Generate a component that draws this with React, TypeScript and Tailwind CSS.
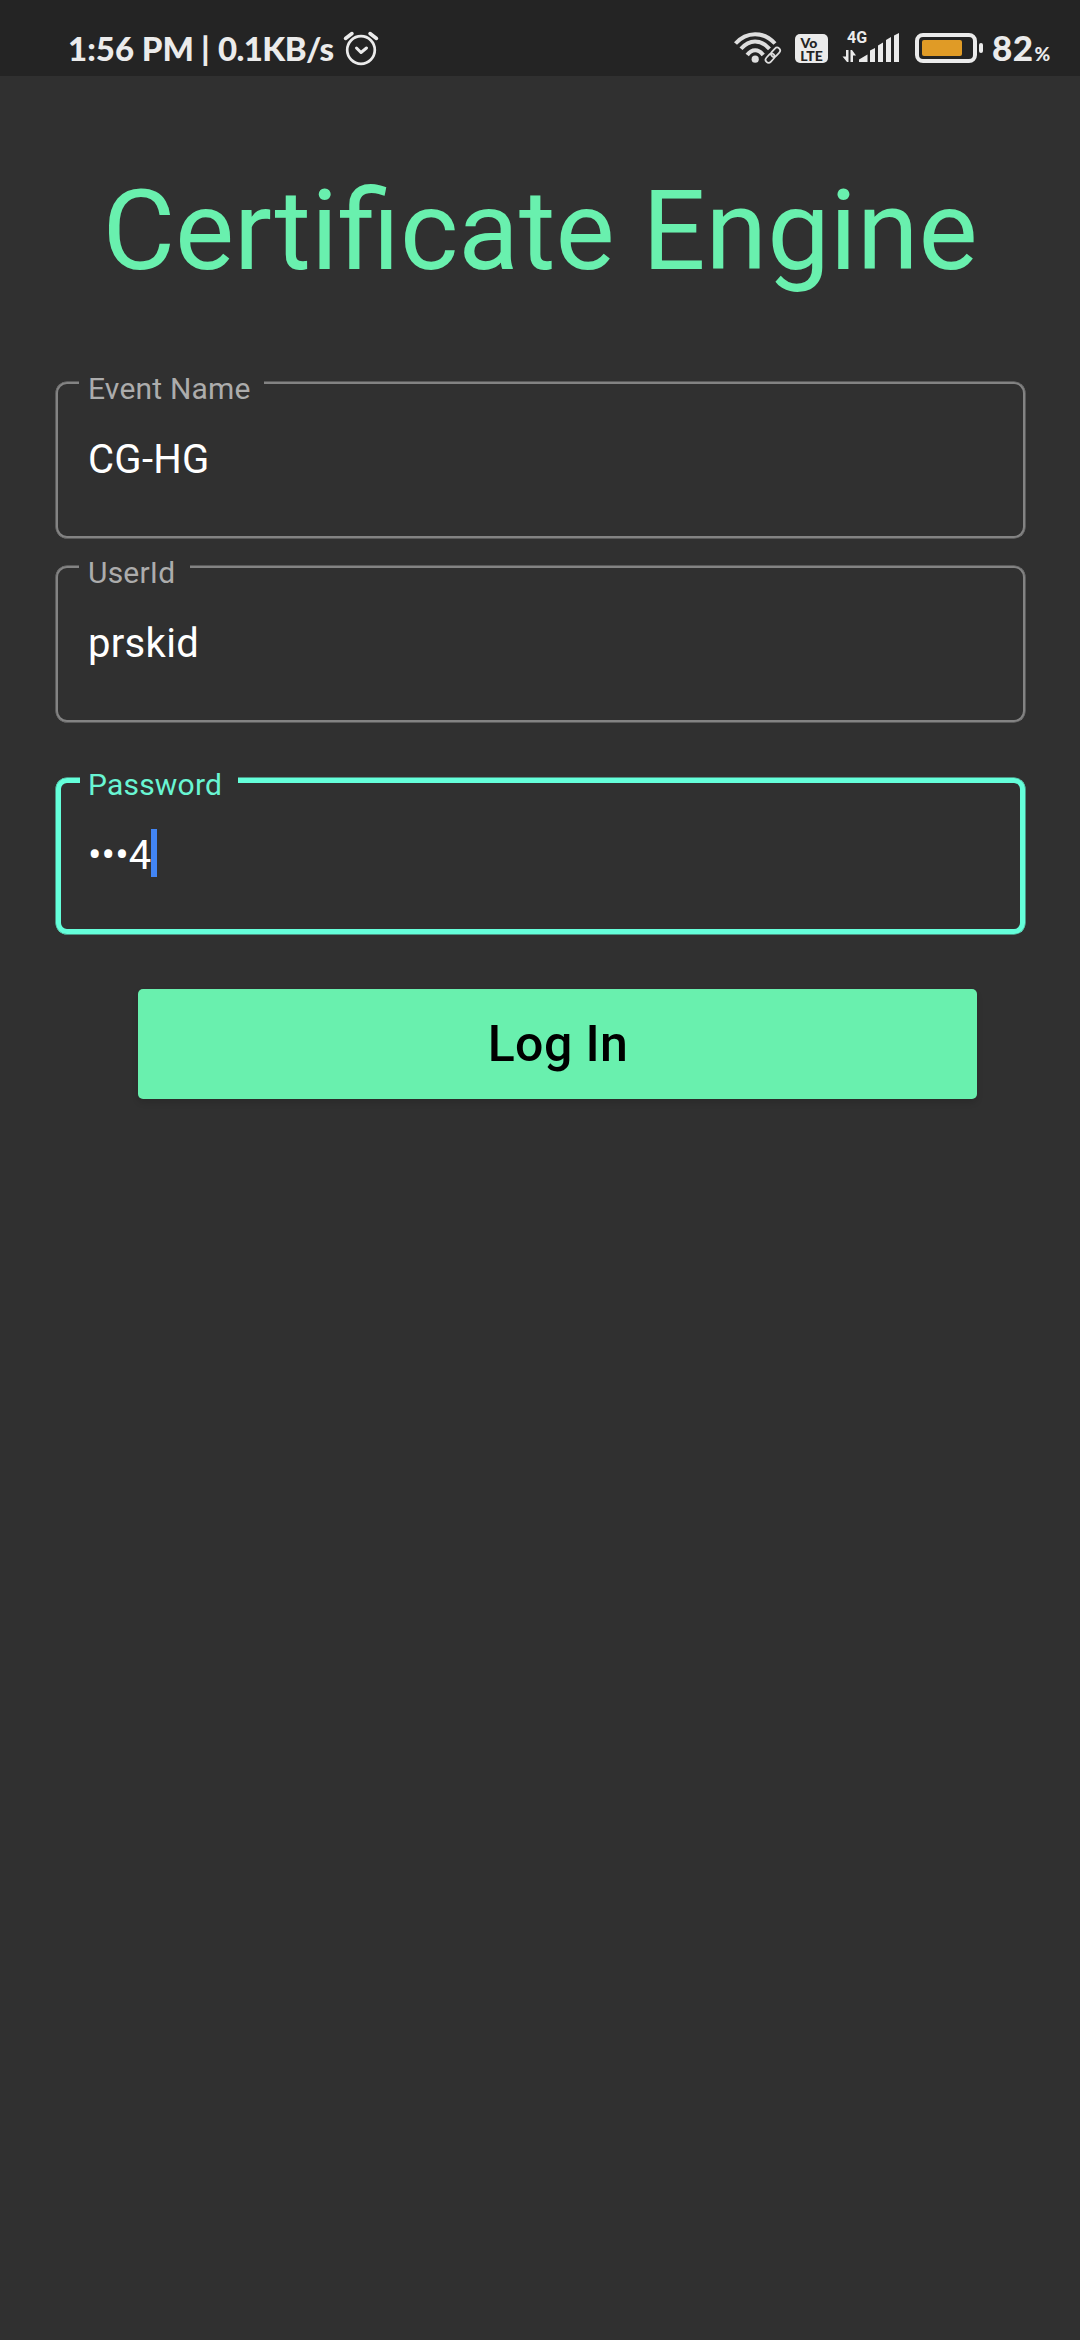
import React from "react";

type FieldProps = {
  label: string;
  focused?: boolean;
  className?: string;
  labelClass: string;
  children: React.ReactNode;
};

function Field({ label, focused, className = "", labelClass, children }: FieldProps) {
  return (
    <div
      className={`relative h-[156px] rounded-[11px] ${
        focused
          ? "border-[5px] border-[#64ffda] pt-[46px] pl-[27px] shadow-[0_0_0_0.5px_#64ffda]"
          : "border-2 border-[#838383] pt-[51px] pl-[30px] shadow-[0_0_0_0.5px_#838383]"
      } ${className}`}
    >
      <span
        className={`absolute h-[30px] bg-[#303030] text-[30px] leading-[30px] tracking-[0.2px] whitespace-nowrap ${labelClass}`}
      >
        {label}
      </span>
      <div className="flex h-[48px] items-center text-[40px] leading-[48px] tracking-[0.3px] whitespace-pre text-white">
        {children}
      </div>
    </div>
  );
}

function AlarmIcon() {
  return (
    <svg className="-mt-[2px] h-[44px] w-[40px]" viewBox="0 0 40 44" fill="none" stroke="#ebebeb" strokeLinecap="round" strokeLinejoin="round">
      <circle cx="20" cy="24" r="13.8" strokeWidth="2.7" />
      <path d="M4.500 12.500 11 7.500M29 7.500l6.500 5" strokeWidth="3.500" />
      <path d="m15.500 22 4.500 4.500 5.500-4.500" strokeWidth="3" />
    </svg>
  );
}

function WifiIcon() {
  return (
    <svg className="mt-[2px] h-[36px] w-[50px]" viewBox="0 0 50 36" fill="none" stroke="#dedede">
      <path d="M2.500 13.500C13.500 1 30.500 1 42 13.500" strokeWidth="4" />
      <path d="M8 18.800C16.500 9 27.500 9 36.500 18.800" strokeWidth="4" />
      <path d="M14.200 25c4.500-6.500 11.500-6.500 16 0" strokeWidth="4" />
      <circle cx="22.200" cy="29.200" r="3.600" fill="#dedede" stroke="none" />
      <g stroke="#242424" strokeWidth="4.500" transform="rotate(-47 40 25)">
        <rect x="30.500" y="22" width="10.500" height="6" rx="3" />
        <rect x="38.500" y="22" width="10.500" height="6" rx="3" />
      </g>
      <g strokeWidth="1.700" transform="rotate(-47 40 25)">
        <rect x="30.500" y="22" width="10.500" height="6" rx="3" />
        <rect x="38.500" y="22" width="10.500" height="6" rx="3" />
      </g>
    </svg>
  );
}

function SignalIcon() {
  return (
    <div className="mt-[3px] ml-[14px] flex w-[59px]">
      <div className="flex w-[27px] flex-col">
        <span className="h-[14px] pl-[5px] text-[16px] leading-[14px] font-bold">4G</span>
        <svg className="h-[18px] w-[27px]" viewBox="0 0 27 18" fill="#ebebeb">
          <path d="M4 5h2.500v12H5L0.500 11.500H4zM8.500 5H10l4 5.500h-3V17H8.500z" />
          <path d="M17 17v-2.500L25.500 9.500V17z" />
        </svg>
      </div>
      <svg className="h-[32px] w-[32px]" viewBox="0 0 32 32" fill="#ebebeb">
        <path d="M1 19.500 6 17v14H1zM9 14.500l5-3V31H9zM17 9l5-3v25h-5zM25 4.500 30 2v29h-5z" />
      </svg>
    </div>
  );
}

function Battery() {
  return (
    <div className="mt-[5px] ml-[14px] flex items-center gap-[2px]">
      <div className="h-[30px] w-[62px] rounded-[8px] border-4 border-[#ebebeb] p-[3px]">
        <div className="h-[16px] w-[40px] rounded-[2px] bg-[#e09b26]" />
      </div>
      <div className="h-[10px] w-[4px] rounded-[2px] bg-[#ebebeb]" />
    </div>
  );
}

function StatusBar() {
  return (
    <header className="flex h-[76px] items-start bg-[#242424] pt-[28px] pl-[68px] text-[#ebebeb]">
      <div className="flex h-[40px] w-[273px] shrink-0 items-center font-['Lato','Open_Sans',sans-serif] text-[33px] leading-[40px] font-black whitespace-nowrap">
        <span className="w-[133px]">1:56 PM</span>
        <span className="w-[17px]">|</span>
        <span className="tracking-[-0.6px]">0.1KB/s</span>
      </div>
      <AlarmIcon />
      <div className="ml-[352px] flex items-start">
        <WifiIcon />
        <div className="mt-[6px] ml-[12px] flex h-[29px] w-[33px] flex-col items-center rounded-[5px] bg-[#ebebeb] pt-[2px] font-['Lato',sans-serif] text-[14px] leading-[13px] font-black text-[#242424]">
          <span className="-ml-[5px]">Vo</span>
          <span>LTE</span>
        </div>
        <SignalIcon />
        <Battery />
        <div className="-mt-[1px] flex h-[40px] items-baseline pl-[9px] font-['Lato','Open_Sans',sans-serif] leading-[40px] font-black">
          <span className="text-[35px] tracking-[0.5px]">82</span>
          <span className="ml-[1px] text-[19px]">%</span>
        </div>
      </div>
    </header>
  );
}

export default function App() {
  return (
    <div className="h-[2340px] w-[1080px] bg-[#303030] font-['Roboto',sans-serif]">
      <StatusBar />
      <h1 className="pt-[90px] text-center text-[111.5px] leading-[130px] text-[#69f0ae]">Certificate Engine</h1>
      <main className="ml-[56px] w-[969px] pt-[86px]">
        <Field label="Event Name" labelClass="left-[21px] -top-[10px] w-[185px] pl-[9px] text-[#acacac]">
          <span className="pt-[2px]">CG-HG</span>
        </Field>
        <Field label="UserId" className="mt-[28px]" labelClass="left-[21px] -top-[10px] w-[111px] pl-[9px] text-[#acacac]">
          <span className="pt-[1px]">prskid</span>
        </Field>
        <Field label="Password" focused className="mt-[56px]" labelClass="left-[19px] -top-[13px] w-[158px] pl-[8px] text-[#69f5d3]">
          <span className="pt-[5px] tracking-[0.1px]">•••4</span>
          <span className="h-[48px] w-[6px] bg-[#4285f4]" />
        </Field>
        <button className="mt-[55px] ml-[81.5px] block h-[110px] w-[839px] rounded-[5px] bg-[#69f0ae] pl-[2px] text-[50px] font-medium tracking-[0.4px] text-black shadow-[0_4px_6px_rgba(0,0,0,0.12)]">
          Log In
        </button>
      </main>
    </div>
  );
}
